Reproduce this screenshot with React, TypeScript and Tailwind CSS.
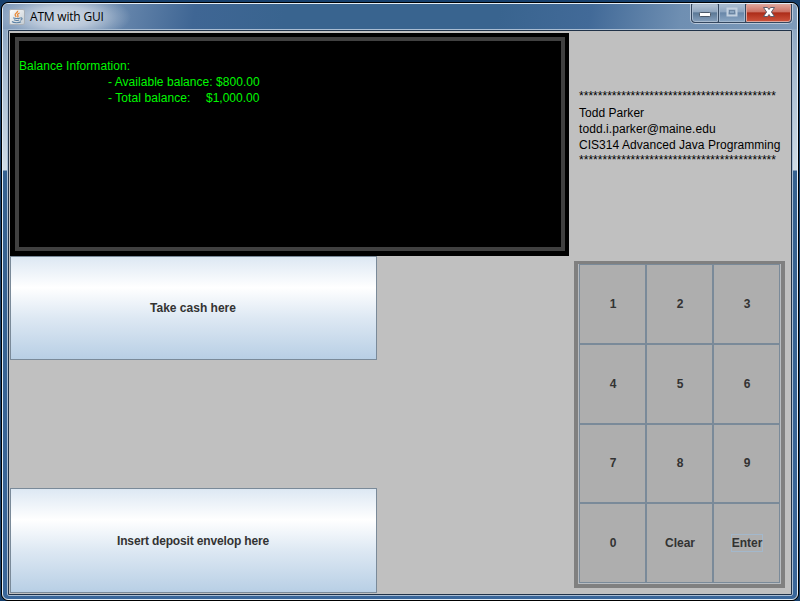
import React from 'react';

function JavaIcon() {
  return (
    <svg width="16" height="16" viewBox="0 0 16 16" className="block">
      <defs>
        <linearGradient id="tile" x1="0" y1="0" x2="1" y2="1">
          <stop offset="0" stopColor="#ffffff" />
          <stop offset="1" stopColor="#c4ccd2" />
        </linearGradient>
      </defs>
      <rect x="0.5" y="0.5" width="15" height="15" rx="1.5" fill="url(#tile)" stroke="#a9b0b8" />
      <path d="M8.6 1.8C9.3 3.6 5.2 4.4 6.2 6.2L7.2 8M10.6 4C8.2 5 8.3 5.7 8.9 6.6S8.7 8 8.5 8.3" fill="none" stroke="#e98836" strokeWidth="1.3" />
      <path d="M4.2 8.8C5.6 9.7 9.6 9.7 11 8.9M5 10.8C6.4 11.5 8.8 11.5 10 10.9M3 12.5C4.5 14.1 10.5 14 12 12.8M11.3 9C13.8 8.4 13.5 10.7 11.3 11.3" fill="none" stroke="#5c82a5" strokeWidth="1.1" />
    </svg>
  );
}

function WindowButtons() {
  return (
    <div className="flex h-[20px] w-[103px] overflow-hidden rounded-b-[5px] border border-t-0 border-[#b9c8da] bg-[#34475f] p-px pt-0">
      <div className="flex h-[18px] w-[26px] justify-center rounded-bl-[3px] border border-[#a9bbcf] bg-[linear-gradient(#b0c0d2_0%,#8fa5be_45%,#5a7795_48%,#839db9_100%)]">
        <svg width="14" height="16" viewBox="0 0 14 16" className="shrink-0"><rect x="1.5" y="7.5" width="11" height="4" rx="0.8" fill="#fff" stroke="#4a5869" /></svg>
      </div>
      <div className="ml-px flex h-[18px] w-[26px] justify-center border border-[#a3b8cf] bg-[linear-gradient(#a8bbd0_0%,#8ba4c0_45%,#6886a8_48%,#87a3c1_100%)]">
        <svg width="14" height="16" viewBox="0 0 14 16" className="shrink-0"><rect x="2.5" y="3.5" width="9" height="7" fill="none" stroke="#c2d0df" strokeWidth="2" /><rect x="4.5" y="5.5" width="5" height="3" fill="#8ba5c0" stroke="#667f9c" strokeWidth=".8" /></svg>
      </div>
      <div className="ml-px flex h-[18px] flex-1 justify-center rounded-br-[3px] border border-[#dda59c] bg-[linear-gradient(#dfa196_0%,#cb6f61_45%,#ac2b18_48%,#cb513a_100%)]">
        <svg width="14" height="16" viewBox="0 0 14 16" className="shrink-0"><path d="M1.5 2.5H5.5L7 4.5L8.5 2.5H12.5L9.4 7L12.5 11.5H8.5L7 9.5L5.5 11.5H1.5L4.6 7Z" fill="#fff" stroke="#505565" strokeWidth=".9" /></svg>
      </div>
    </div>
  );
}

function TitleBar() {
  return (
    <header className="flex h-[25px] items-start justify-between bg-[radial-gradient(ellipse_68px_24px_at_60px_13px,#d2dbe6_0%,#c3cfdedd_45%,#a9bbd066_80%,#a9bbd000_100%),linear-gradient(100deg,#809bbb_0px,#7592b5_90px,#3f6694_190px,#39648f_280px,#39648f_490px,#426a98_580px,#6f8fb2_670px,#809cbb_800px)]">
      <div className="flex items-center gap-[5px] pl-[6px] pt-[5px]">
        <JavaIcon />
        <span className="whitespace-nowrap font-['Open_Sans','Noto_Sans',sans-serif] text-[12px] leading-[16px] tracking-[-0.2px] text-black">ATM with GUI</span>
      </div>
      <div className="mr-[4px]"><WindowButtons /></div>
    </header>
  );
}

function Screen() {
  return (
    <div className="h-[223px] w-[559px] bg-black px-[5px] pb-[5px] pt-[4px]">
      <div className="h-full w-[550px] whitespace-nowrap border-4 border-[#404040] pt-[17px] text-[12px] leading-[16px] text-[#00f800]">
        <p className="tracking-[0.05px]">Balance Information:</p>
        <p className="pl-[89px] tracking-[0.04px]">- Available balance: $800.00</p>
        <p className="flex pl-[89px]"><span className="w-[98px] tracking-[0.08px]">- Total balance:</span><span>$1,000.00</span></p>
      </div>
    </div>
  );
}

function SlotButton({ label, size }: { label: string; size: string }) {
  return (
    <button className={`flex w-[367px] items-center justify-center border border-[#7a8a99] bg-[linear-gradient(#dde8f3_0%,#ffffff_30%,#dde8f3_60%,#b8cfe5_100%)] text-[12px] font-bold text-[#333] ${size}`}>
      {label}
    </button>
  );
}

function Keypad() {
  const keys = ['1', '2', '3', '4', '5', '6', '7', '8', '9', '0', 'Clear', 'Enter'];
  return (
    <div className="h-[327px] w-[211px] border-4 border-t-[3px] border-[#808080] bg-[#b8bcc0] pl-px">
      <div className="grid h-[319px] w-[201px] grid-cols-3 grid-rows-4">
        {keys.map((key) => (
          <button key={key} className="flex items-center justify-center border border-[#7a8a99] bg-[#aeaeae] pl-px text-[12px] font-bold text-[#333]">
            <span className={key === 'Enter' ? 'border border-[#a3b8cc] leading-[16px]' : ''}>{key}</span>
          </button>
        ))}
      </div>
    </div>
  );
}

export default function App() {
  return (
    <main className="h-[601px] w-[800px] overflow-hidden bg-[#17406d] pl-px pr-px pt-[2px] font-['Liberation_Sans',Arial,sans-serif]">
      <div className="h-[599px] w-[798px] rounded-[7px] border border-black bg-black">
        <div className="h-[597px] w-[796px] overflow-hidden rounded-[6px] border border-[#e3edf6] bg-[linear-gradient(#809bbb_0px,#a9bed2_75px,#cedbe6_166px,#35618f_167px,#39669a_100%)]">
          <TitleBar />
          <div className="ml-[4px] h-[567px] w-[786px] rounded-[2px] border border-[#a9bdd3] bg-[#203248] p-px">
            <div className="flex h-[563px] w-[782px] bg-[#c0c0c0] pl-px pt-[2px]">
              <section className="flex w-[559px] flex-col items-start">
                <Screen />
                <SlotButton label="Take cash here" size="h-[104px] shrink-0 pr-px" />
                <div className="h-[128px] shrink-0" />
                <SlotButton label="Insert deposit envelop here" size="h-[105px] shrink-0 pr-px tracking-[-0.15px]" />
              </section>
              <aside className="flex flex-1 flex-col pl-[5px] pt-[55px]">
                <div className="h-[173px] shrink-0 whitespace-nowrap pl-[5px] text-[12px] leading-[16px] tracking-[0.04px] text-black">
                  <p className="mb-px tracking-[0.02px]">******************************************</p>
                  <p>Todd Parker</p>
                  <p className="tracking-[0.08px]">todd.i.parker@maine.edu</p>
                  <p>CIS314 Advanced Java Programming</p>
                  <p className="-mt-px tracking-[0.02px]">******************************************</p>
                </div>
                <Keypad />
              </aside>
            </div>
          </div>
        </div>
      </div>
    </main>
  );
}
